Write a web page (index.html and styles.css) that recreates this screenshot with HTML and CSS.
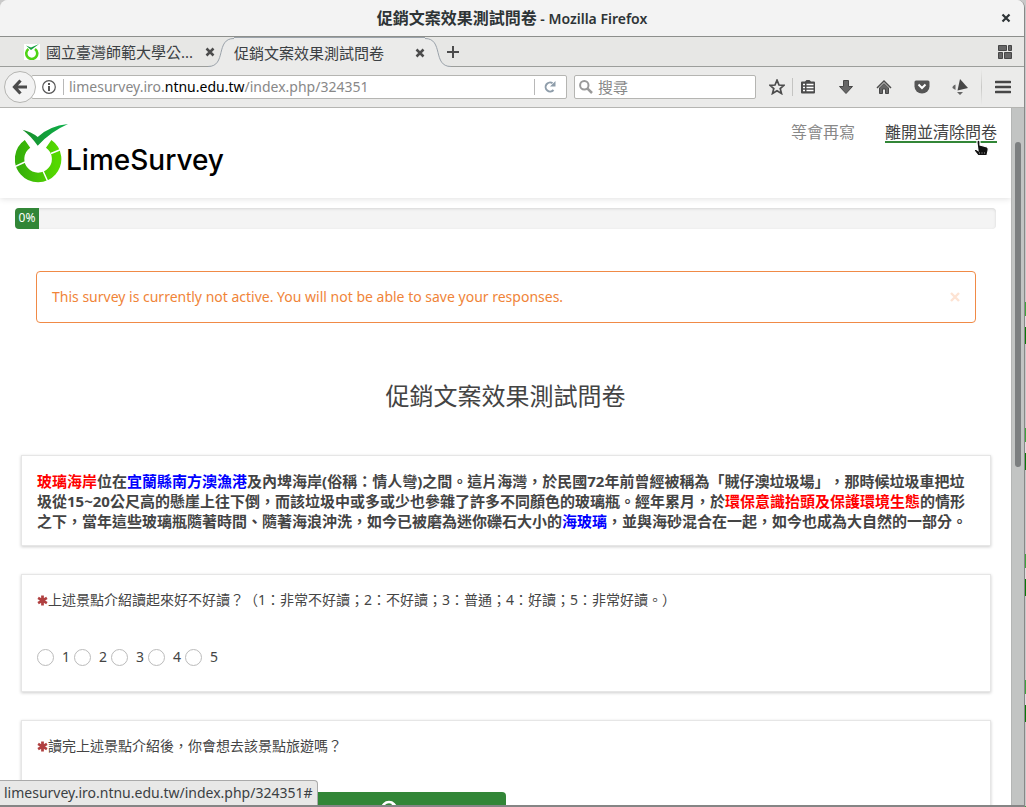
FILE: index.html
```html
<!DOCTYPE html>
<html lang="zh-Hant">
<head>
<meta charset="utf-8">
<title>促銷文案效果測試問卷</title>
<link rel="stylesheet" href="styles.css">
</head>
<body>
<div class="window">
  <header class="titlebar">
    <h1 class="window-title"><span class="window-doc">促銷文案效果測試問卷</span> - Mozilla Firefox</h1>
    <button class="window-close" aria-label="Close window"><svg width="10" height="10" viewBox="0 0 10 10"><path d="M1.500 1.500l7 7M8.500 1.500l-7 7" stroke="#2e3436" stroke-width="2.200"/></svg></button>
  </header>

  <nav class="tabs">
    <div class="tab">
      <svg width="16" height="16" viewBox="0 0 16 16"><rect width="16" height="16" fill="#fff"/><path d="M4.500 5A5.500 5.500 0 1 0 11 5" fill="none" stroke="#4fd314" stroke-width="2.600"/><path d="M2 1.500L7 3.500L15 0L7 6Z" fill="#12a03c"/></svg>
      <a class="tab-label" href="#">國立臺灣師範大學公...</a>
      <button class="tab-close" aria-label="Close tab"><svg width="10" height="10" viewBox="0 0 10 10"><path d="M1.500 1.500l7 7M8.500 1.500l-7 7" stroke="#4c4c4c" stroke-width="2.500"/></svg></button>
    </div>
    <svg class="curve curve-left" width="26" height="30" viewBox="0 0 26 30"><path d="M0 30V29.500C19 29.500 7 1.500 26 1.500V30Z" fill="#ebebea"/><path d="M0 29.500C19 29.500 7 1.500 26 1.500" fill="none" stroke="#9aa2aa"/></svg>
    <div class="tab tab-active">
      <a class="tab-label" href="#">促銷文案效果測試問卷</a>
      <button class="tab-close" aria-label="Close tab"><svg width="10" height="10" viewBox="0 0 10 10"><path d="M1.500 1.500l7 7M8.500 1.500l-7 7" stroke="#4c4c4c" stroke-width="2.500"/></svg></button>
    </div>
    <svg class="curve" width="26" height="30" viewBox="0 0 26 30"><path d="M26 30V29.500C7 29.500 19 1.500 0 1.500V30Z" fill="#ebebea"/><path d="M26 29.500C7 29.500 19 1.500 0 1.500" fill="none" stroke="#9aa2aa"/></svg>
    <button class="new-tab" aria-label="New tab"><svg width="12" height="12" viewBox="0 0 12 12"><path d="M6 0v12M0 6h12" stroke="#4c4c4c" stroke-width="2"/></svg></button>
    <button class="tab-groups" aria-label="Tab groups"><svg width="14" height="14" viewBox="0 0 14 14" fill="#666" stroke="#474747"><path d="M.5.5h8v5h-8zM10.500.5h3v5h-3zM.5 7.500h4v6h-4zM6.500 7.500h7v6h-7z"/></svg></button>
  </nav>

  <div class="toolbar">
    <button class="back" aria-label="Back"><svg width="16" height="16" viewBox="0 0 16 16"><path d="M8.500 1.500L2.500 8L8.500 14.500M3 8H15" fill="none" stroke="#4c4c4c" stroke-width="3.200"/></svg></button>
    <div class="address">
      <svg width="14" height="14" viewBox="0 0 14 14"><circle cx="7" cy="7" r="6.300" fill="none" stroke="#555" stroke-width="1.200"/><path d="M7 3v2M7 6v5" stroke="#444" stroke-width="1.800"/></svg>
      <span class="rule"></span>
      <span class="url">limesurvey.iro.<b>ntnu.edu.tw</b>/index.php/324351</span>
      <span class="rule"></span>
      <button class="reload" aria-label="Reload"><svg width="12" height="12" viewBox="0 0 12 12"><path d="M9.500 9A4.500 4.500 0 1 1 8.500 2.200" fill="none" stroke="#8e9daa" stroke-width="2"/><path d="M11.500 0V5.500H6Z" fill="#8e9daa"/></svg></button>
    </div>
    <label class="search">
      <svg width="14" height="14" viewBox="0 0 14 14"><circle cx="5.300" cy="5.300" r="4.200" fill="none" stroke="#999" stroke-width="2"/><path d="M8.300 8.300L13 13" stroke="#999" stroke-width="2.500"/></svg>
      <input class="search-input" type="text" placeholder="搜尋" aria-label="搜尋">
    </label>
    <div class="tools">
      <button aria-label="Bookmark"><svg width="16" height="16" viewBox="0 0 16 16"><path d="M8 1.200L10 6L15 6.300L11.200 9.500L12.500 14.500L8 11.800L3.500 14.500L4.800 9.500L1 6.300L6 6Z" fill="none" stroke="#4c4c4c" stroke-width="1.700"/></svg></button>
      <span class="tool-rule"></span>
      <button aria-label="Bookmarks list"><svg width="16" height="16" viewBox="0 0 16 16"><path d="M1 3.500q0-1 1-1h3l1.500-1.500h3L11 2.500h3q1 0 1 1v10q0 1-1 1H2q-1 0-1-1z" fill="#4c4c4c"/><path d="M3 5.500h2M6.500 5.500h7M3 8.500h2M6.500 8.500h7M3 11.500h2M6.500 11.500h7" stroke="#fff" stroke-width="1.500"/></svg></button>
      <button aria-label="Downloads"><svg width="16" height="16" viewBox="0 0 16 16"><path d="M5.500 1.500h5v6h4L8 14.500L1.500 7.500h4z" fill="#666" stroke="#474747"/></svg></button>
      <button aria-label="Home"><svg width="16" height="16" viewBox="0 0 16 16"><path d="M1 9L8 2L15 9" fill="none" stroke="#4c4c4c" stroke-width="1.500"/><path d="M3.500 9L8 4.500L12.500 9V14.500H9.500V10H6.500V14.500H3.500Z" fill="#666" stroke="#474747"/></svg></button>
      <button aria-label="Pocket"><svg width="16" height="16" viewBox="0 0 16 16"><path d="M2 1.500h12q1.500 0 1.500 1.500v4.500a7.500 7 0 0 1-15 0V3Q.5 1.500 2 1.500z" fill="#555"/><path d="M4.500 5.500L8 9L11.500 5.500" fill="none" stroke="#fff" stroke-width="2"/></svg></button>
      <button aria-label="Add-on"><svg width="16" height="16" viewBox="0 0 16 16"><path d="M8 0L16 9L5.500 11.500Z" fill="#474747"/><path d="M3.500 5.500V11L.5 9Q0 7 3.500 5.500ZM5 13h6L8 16Z" fill="#666"/></svg></button>
      <span class="tool-rule tool-rule-tall"></span>
      <button aria-label="Menu"><svg width="16" height="14" viewBox="0 0 16 14"><path d="M1 2h14M1 7h14M1 12h14" stroke="#474747" stroke-width="2.700" stroke-linecap="round"/></svg></button>
    </div>
  </div>

  <div class="viewport">
    <main class="page">
      <header class="site-header">
        <a class="logo" href="#">
          <svg width="53" height="59" viewBox="0 0 53 59">
            <defs>
              <linearGradient id="ring" x1="0" x2="1"><stop offset="0" stop-color="#36b00a"/><stop offset="1" stop-color="#55d800"/></linearGradient>
              <linearGradient id="tick" x1="0" x2="1"><stop offset="0" stop-color="#1a8f2a"/><stop offset="1" stop-color="#0bb04a"/></linearGradient>
            </defs>
            <path d="M12.500 19.800A18.500 18.500 0 1 0 33.700 19.800" fill="none" stroke="url(#ring)" stroke-width="9.500"/>
            <path d="M36 29.500L47 25M10 38L0 42.500M28 47L33 58" stroke="#fff" stroke-width="1.500"/>
            <path d="M7.500 5.700Q16 7.500 22.700 13Q34 2 53 0Q35 8 22.700 21.700Q16 12 7.500 5.700Z" fill="url(#tick)"/>
          </svg>
          <span class="logo-name">LimeSurvey</span>
        </a>
        <nav class="site-nav">
          <a class="nav-link" href="#">等會再寫</a>
          <a class="nav-link nav-hover" href="#">離開並清除問卷
            <svg class="cursor" width="18" height="18" viewBox="0 0 18 18"><path d="M4 2Q6 0 7 2.500V6L14 8Q16 9 15 12L14 16.500H5L1.500 12Q1 10 3.500 10.500L5 11.500L4 4Z" fill="#111" stroke="#fff" stroke-width="1.200"/><path d="M6.500 13.500v1M9 13.500v1M11.500 13.500v1" stroke="#aaa"/></svg>
          </a>
        </nav>
      </header>

      <div class="progress"><div class="progress-bar">0%</div></div>

      <div class="alert" role="alert">
        <span>This survey is currently not active. You will not be able to save your responses.</span>
        <button class="alert-close" aria-label="Close"><svg width="10" height="10" viewBox="0 0 10 10"><path d="M1 1l8 8M9 1l-8 8" stroke="#fde3d3" stroke-width="2.400"/></svg></button>
      </div>

      <h2 class="survey-title">促銷文案效果測試問卷</h2>

      <section class="card intro"><span class="red">玻璃海岸</span>位在<span class="blue">宜蘭縣南方澳漁港</span>及內埤海岸(俗稱：情人彎)之間。這片海灣，於民國72年前曾經被稱為「賊仔澳垃圾場」，那時候垃圾車把垃圾從15~20公尺高的懸崖上往下倒，而該垃圾中或多或少也參雜了許多不同顏色的玻璃瓶。經年累月，於<span class="red">環保意識抬頭及保護環境生態</span>的情形之下，當年這些玻璃瓶隨著時間、隨著海浪沖洗，如今已被磨為迷你礫石大小的<span class="blue">海玻璃</span>，並與海砂混合在一起，如今也成為大自然的一部分。</section>

      <section class="card">
        <p class="question"><svg class="required" width="11" height="11" viewBox="0 0 12 12"><path d="M6 .5v11M1.200 3.200l9.600 5.600M10.800 3.200L1.200 8.800" stroke="#b04040" stroke-width="3"/></svg>上述景點介紹讀起來好不好讀？（1：非常不好讀；2：不好讀；3：普通；4：好讀；5：非常好讀。）</p>
        <div class="answers">
          <label class="answer"><input type="radio" name="readable">1</label>
          <label class="answer"><input type="radio" name="readable">2</label>
          <label class="answer"><input type="radio" name="readable">3</label>
          <label class="answer"><input type="radio" name="readable">4</label>
          <label class="answer"><input type="radio" name="readable">5</label>
        </div>
      </section>

      <section class="card">
        <p class="question"><svg class="required" width="11" height="11" viewBox="0 0 12 12"><path d="M6 .5v11M1.200 3.200l9.600 5.600M10.800 3.200L1.200 8.800" stroke="#b04040" stroke-width="3"/></svg>讀完上述景點介紹後，你會想去該景點旅遊嗎？</p>
        <button class="choice" aria-label="No"><svg width="18" height="18" viewBox="0 0 18 18"><circle cx="9" cy="9" r="7" fill="none" stroke="#fff" stroke-width="2.500"/><path d="M14 4L4 14" stroke="#fff" stroke-width="2.500"/></svg></button>
      </section>
    </main>
    <div class="scrollbar"><div class="thumb"></div></div>
    <div class="status">limesurvey.iro.ntnu.edu.tw/index.php/324351#</div>
  </div>
</div>
</body>
</html>
```
FILE: styles.css
```css
* { box-sizing: border-box; }

body {
  margin: 0;
  height: 100vh;
  padding-right: 1px;
  overflow: hidden;
  background:
    linear-gradient(#c9c9c9, #c9c9c9) top / 100% 300px no-repeat,
    repeating-linear-gradient(#c9c9c9 0 50px, #3da53d 50px 64px, #ddd 64px 75px, #087a08 75px 92px, #c9c9c9 92px 126px);
  font: 14px/20px "Noto Sans", "Noto Sans CJK TC", sans-serif;
  text-spacing-trim: space-all;
  color: #444;
}

a { color: inherit; text-decoration: none; }
svg { display: block; flex: none; }

button {
  display: flex;
  align-items: center;
  justify-content: center;
  padding: 0;
  border: 0;
  background: none;
}

.window {
  height: 100%;
  display: flex;
  flex-direction: column;
  border-right: 1px solid #888;
  border-bottom: 2px solid #858585;
  border-radius: 8px 8px 0 0;
  overflow: hidden;
  background: #ebebea;
}

/* Browser chrome */
.titlebar {
  flex: none;
  height: 37px;
  display: flex;
  align-items: center;
  padding-right: 13px;
  background: #f3f3f3;
  border-bottom: 1px solid #8d8f8c;
}
.window-title {
  flex: 1;
  margin: 0;
  padding-left: 23px;
  text-align: center;
  font-size: 14px;
  font-weight: 600;
  color: #2e3436;
}
.window-doc { font-size: 16px; }

.tabs {
  flex: none;
  height: 30px;
  display: flex;
  background: linear-gradient(#9c9e9b, #9c9e9b) bottom / 100% 1px no-repeat, #e7e7e5;
  font-size: 15px;
}
.tab {
  display: flex;
  align-items: center;
  gap: 6px;
  padding-left: 24px;
  color: #3b4043;
}
.tab-label { width: 153px; white-space: nowrap; }
.tab-active {
  padding-left: 0;
  background: #ebebea;
  border-top: 1px solid #9aa2aa;
}
.tab-active .tab-label { width: 175px; }
.curve-left { margin-left: -7px; }
.tab-close { z-index: 1; }
.new-tab { margin: 0 auto 0 -4px; }
.tab-groups { margin-right: 12px; }

.toolbar {
  flex: none;
  height: 41px;
  display: flex;
  align-items: center;
  padding: 0 13px 0 4px;
  border-bottom: 1px solid #b5b5b2;
}
.back {
  z-index: 1;
  width: 32px;
  height: 32px;
  border: 1px solid #b5b5b2;
  border-radius: 50%;
  background: #f3f3f3;
}
.address, .search {
  height: 24px;
  display: flex;
  align-items: center;
  background: #fff;
  border: 1px solid #b5b5b2;
  border-radius: 2px;
}
.address {
  flex: 1;
  gap: 5px;
  margin-left: -5px;
  padding: 0 10px;
}
.rule { width: 1px; height: 16px; margin-left: 2px; background: #b8b8b8; }
.url { flex: 1; color: #888; }
.url b { font-weight: 400; color: #000; }
.reload { margin-left: 4px; }
.search {
  width: 182px;
  margin-left: 7px;
  padding-left: 4px;
  gap: 5px;
}
.search-input {
  flex: 1;
  min-width: 0;
  padding: 0;
  border: 0;
  outline: 0;
  background: none;
  font: inherit;
  font-size: 15px;
}
.search-input::placeholder { color: #888; }
.tools {
  display: flex;
  align-items: center;
  gap: 22px;
  padding-left: 13px;
}
.tool-rule { width: 1px; height: 18px; margin: 0 -15px; background: #c4c4c2; }
.tool-rule-tall {
  height: 36px;
  margin: 0 -9px;
  background: linear-gradient(transparent, #c8c8c6, transparent);
}

/* Survey page */
.viewport {
  position: relative;
  flex: 1;
  min-height: 0;
  display: flex;
}
.page {
  flex: 1;
  overflow: hidden;
  background: #fff;
}
.scrollbar {
  width: 13px;
  padding: 34px 3px 0;
  background: #c2c4c3;
  border-left: 1px solid #b4b6b5;
}
.thumb {
  height: 49%;
  border-radius: 3px;
  background: #7c7f80;
}

.site-header {
  display: flex;
  justify-content: space-between;
  align-items: flex-start;
  padding: 15px 14px 15px 15px;
  box-shadow: 0 1px 6px rgba(0, 0, 0, 0.12);
}
.logo {
  display: flex;
  align-items: center;
  height: 60px;
}
.logo-name {
  margin: 14px 0 0 -2px;
  font: 500 28px/40px Inter, sans-serif;
  color: #000;
}
.site-nav {
  display: flex;
  gap: 30px;
  font-size: 16px;
  line-height: 18px;
}
.nav-link { position: relative; color: #888; border-bottom: 2px solid transparent; }
.nav-hover { color: #444; border-color: #328637; }
.cursor { position: absolute; right: 6px; top: 16px; }

.progress {
  height: 21px;
  margin: 10px 15px 42px;
  overflow: hidden;
  border-radius: 4px;
  background: #f4f4f4;
  box-shadow: inset 0 1px 3px rgba(0, 0, 0, 0.12);
}
.progress-bar {
  width: 24px;
  height: 100%;
  background: #328637;
  color: #fff;
  font-size: 12px;
  text-align: center;
}

.alert {
  display: flex;
  align-items: center;
  justify-content: space-between;
  margin: 0 35px 0 36px;
  padding: 15px;
  border: 1px solid #f08a46;
  border-radius: 4px;
  color: #f08438;
}

.survey-title {
  margin: 55px 0 42px;
  text-align: center;
  font-size: 24px;
  line-height: 35px;
  font-weight: 400;
}

.card {
  margin: 0 20px 28px 21px;
  padding: 15px;
  border: 1px solid #e6e6e6;
  box-shadow: 0 1px 3px rgba(0, 0, 0, 0.2);
}
.intro {
  padding-bottom: 14px;
  font-size: 15px;
  font-weight: 700;
}
.red { color: #f00; }
.blue { color: #00f; }

.question { margin: 0 0 36px; }
.required { display: inline-block; vertical-align: -1px; }
.answers { display: flex; padding: 1px 0 9px; }
.answer {
  display: flex;
  align-items: center;
  gap: 8px;
  width: 37px;
}
.answer input {
  appearance: none;
  width: 17px;
  height: 17px;
  margin: 0;
  border: 1px solid #bbb;
  border-radius: 50%;
  background: #fff;
}
.choice {
  width: 234px;
  height: 34px;
  margin-left: 235px;
  border-radius: 4px;
  background: #328637;
}

.status {
  position: absolute;
  left: 0;
  bottom: 0;
  padding: 2px 4px;
  border: 1px solid #aaa;
  border-width: 1px 1px 0 0;
  border-radius: 0 4px 0 0;
  background: #e8e8e7;
  color: #3b4043;
}
```
